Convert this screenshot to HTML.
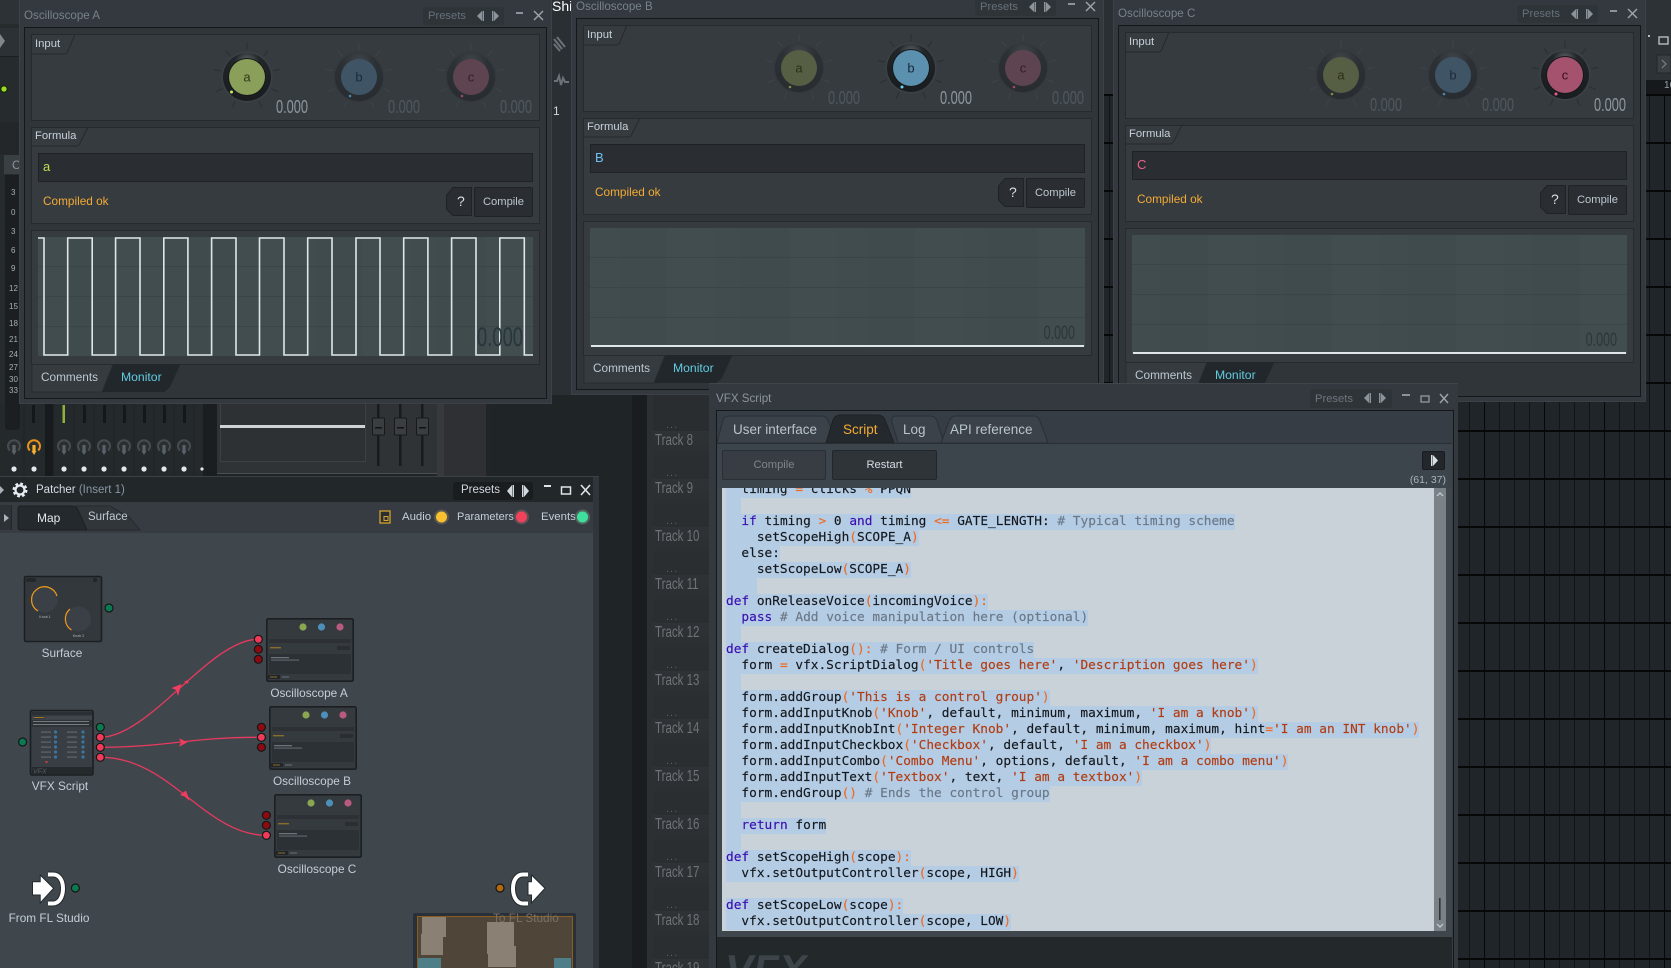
<!DOCTYPE html>
<html><head><meta charset="utf-8"><title>VFX Script</title>
<style>
html,body{margin:0;padding:0;width:1671px;height:968px;overflow:hidden;background:#1f2427}
body{position:relative;font-family:"Liberation Sans",sans-serif;font-size:12px;color:#c5d0da}
div,svg,span.t{position:absolute}
svg{overflow:visible}
.t{position:absolute;white-space:nowrap;line-height:14px;height:14px}
.g{left:1103px;top:94px;width:568px;height:874px;background-color:#1f2529;background-image:linear-gradient(180deg,#060808 2px,transparent 2px),linear-gradient(90deg,#060808 1px,transparent 1px),linear-gradient(90deg,#111517 1px,transparent 1px);background-size:100% 48px,60px 100%,15px 100%;background-position:0 0,21px 0,6px 0}
.osc{width:0;height:0}
.w{left:19px;top:0;width:531px;height:403px;background:#33393e;border:1px solid #3b4146;border-top:0}
.fr{left:24px;top:27px;width:521px;height:370px;background:#30353a;border:1px solid #15181a}
.pn{left:31px;width:507px;background:#363b40;border:1px solid #262a2e}
.ti{top:9px;font-size:11.6px;color:#78818a}
.pre{left:423px;top:7px;width:81px;height:18px;background:#2f3439;border-radius:3px}
.pret{left:428px;top:9px;font-size:11.2px;color:#667078}
.hd{left:35px;font-size:11.3px;color:#c8d2da}
.val{width:80px;text-align:right;font-size:18px;line-height:18px;height:18px;top:98px;transform:scaleX(.71);transform-origin:100% 50%;color:#4f575e}
.box{left:38px;top:153px;width:493px;height:27px;background:#2a2e32;border:1px solid #1f2326}
.ok{left:43px;top:194px;font-size:11.8px;color:#f4ab33}
.cb{left:474px;top:187px;width:57px;height:28px;background:#2a2e32;border:1px solid #1f2326;border-radius:2px;color:#bcc6ce;text-align:center;line-height:28px;font-size:11.2px}
.gr{left:38px;top:237px;width:495px;height:119px;background-color:#414c4e;background-image:linear-gradient(180deg,transparent 29px,#3a4547 29px,#3a4547 30px,transparent 30px,transparent 59px,#3a4547 59px,#3a4547 60px,transparent 60px,transparent 89px,#3a4547 89px,#3a4547 90px,transparent 90px),repeating-linear-gradient(90deg,#414c4e 0,#414c4e 28px,#404b4d 28px,#404b4d 76px,#424d4f 76px,#424d4f 124px)}
.gv{width:80px;text-align:right;left:443px;top:333px;font-size:19px;line-height:20px;height:20px;color:#2c373a;transform:scaleX(.66);transform-origin:100% 50%}
.cm{left:41px;top:370px;font-size:11.8px;color:#bcc8d0}
.mo{left:121px;top:370px;font-size:12.2px;color:#62cbe0}
.l{left:726px;height:16px;line-height:16px;font-family:"DejaVu Sans Mono",monospace;font-size:12.8px;white-space:pre;color:#14181c;-webkit-text-stroke:.15px}
.l b{font-weight:normal;display:inline-block;background:#b5cce5;height:16px;line-height:16px}
.k{color:#3a10b0}.o{color:#f06a20}.c{color:#6a7886}.s{color:#b23c10}
.tr{left:655px;font-size:16px;line-height:16px;height:16px;color:#6c747a;transform:scaleX(.72);transform-origin:0 50%}
.dd{left:666px;font-size:11px;color:#585e62;letter-spacing:1px}
.row{left:653px;width:56px;height:48px;background:linear-gradient(180deg,#2f3336 0,#2a2e31 60%)}
.lb{font-size:11.8px;color:#c4ced6;text-align:center;width:140px}
</style></head><body>
<svg width="0" height="0" style="left:0;top:0"><defs>
<radialGradient id="ra" cx=".5" cy=".2" r=".85"><stop offset="0" stop-color="#6a7076"/><stop offset=".3" stop-color="#23272a"/><stop offset="1" stop-color="#181b1d"/></radialGradient>
<radialGradient id="rd" cx=".5" cy=".2" r=".85"><stop offset="0" stop-color="#41474c"/><stop offset=".4" stop-color="#2c3135"/><stop offset="1" stop-color="#282c30"/></radialGradient>
<symbol id="kd" viewBox="0 0 80 80" width="80" height="80"><path d="M40 13V6M56.8 18.9L61.2 13.4M66.3 33.9L73.1 32.3M64.4 51.6L70.7 54.6M51.8 64.3L54.9 70.6M23.2 18.9L18.8 13.4M13.7 33.9L6.9 32.3M15.6 51.6L9.3 54.6M28.2 64.3L25.1 70.6" stroke="#3e4449" stroke-width="1" fill="none"/><circle cx="40" cy="40" r="25" fill="#33383d"/><circle cx="40" cy="40" r="24" fill="url(#rd)"/></symbol>
<symbol id="ka" viewBox="0 0 80 80" width="80" height="80"><path d="M40 13V6M56.8 18.9L61.2 13.4M66.3 33.9L73.1 32.3M64.4 51.6L70.7 54.6M51.8 64.3L54.9 70.6M23.2 18.9L18.8 13.4M13.7 33.9L6.9 32.3M15.6 51.6L9.3 54.6M28.2 64.3L25.1 70.6" stroke="#2b2f33" stroke-width="1.100" fill="none"/><circle cx="40" cy="40" r="25.5" fill="#3b4146"/><circle cx="40" cy="40" r="24" fill="url(#ra)"/><circle cx="40" cy="40" r="19" fill="#15181a"/></symbol>
<symbol id="al" viewBox="0 0 22 12" width="22" height="12"><path d="M5 1L0 6L5 11Z" fill="#8c949b"/><rect x="5.500" y="1" width="1.500" height="10" fill="#8c949b"/><path d="M17 1L22 6L17 11Z" fill="#8c949b"/><rect x="15" y="1" width="1.500" height="10" fill="#8c949b"/></symbol>
<symbol id="th" viewBox="0 0 88 64" width="88" height="64"><rect x=".8" y=".8" width="86.400" height="62.400" rx="1.500" fill="#353a3e" stroke="#1b1f22" stroke-width="1.600"/><circle cx="37" cy="9" r="3.600" fill="#8aa650"/><circle cx="55.500" cy="9" r="3.600" fill="#4c8fb8"/><circle cx="74" cy="9" r="3.600" fill="#b85a80"/><rect x="3" y="21" width="82" height="4" fill="#2d3135"/><rect x="4" y="29" width="11" height="1.400" fill="#8a6c2c"/><rect x="71" y="28" width="13" height="4" fill="#2a2e31"/><rect x="3" y="36" width="82" height="20" fill="#2c3135"/><rect x="5" y="39" width="18" height="1.300" fill="#6a7378"/><rect x="5" y="41.500" width="28" height="1.200" fill="#5c6469"/><rect x="2" y="57" width="12" height="4" fill="#22262a"/><rect x="4" y="58.500" width="7" height="1" fill="#8a6c2c"/><rect x="16" y="58.500" width="7" height="1" fill="#6a7378"/></symbol>
<symbol id="mk" viewBox="-8 -9 16 20" width="16" height="20"><path d="M-4.200 4.500A6 6 0 1 1 4.200 4.500" fill="#2a2e31" stroke="#464c50" stroke-width="2"/><rect x="-1.600" y="-1" width="3.200" height="7" fill="#596269"/><path d="M-2.500 5L0 9L2.500 5Z" fill="#596269"/></symbol>
<symbol id="mko" viewBox="-8 -9 16 20" width="16" height="20"><path d="M-4.200 4.500A6 6 0 1 1 4.200 4.500" fill="#2a2e31" stroke="#e8901c" stroke-width="2"/><rect x="-1.600" y="-1" width="3.200" height="7" fill="#f4b030"/><path d="M-2.500 5L0 9L2.500 5Z" fill="#f4b030"/></symbol>
</defs></svg>

<div class="g"></div>
<!-- top strips -->
<div style="left:0;top:0;width:20px;height:480px;background:#262b2e"></div>
<div style="left:0;top:0;width:20px;height:24px;background:#2d3236"></div>
<div style="left:0;top:28px;width:20px;height:28px;background:#2c3135;border-bottom:1px solid #1c2022"></div>
<svg width="10" height="14" style="left:0;top:34px"><path d="M0 0L5 7L0 14Z" fill="#7f868c"/></svg>
<div style="left:0;top:122px;width:20px;height:33px;background:#23272a"></div>
<div style="left:4px;top:155px;width:15px;height:19px;background:#3a3f44"></div>
<span class="t" style="left:12px;top:158px;color:#8a9298">C</span>
<div style="left:5px;top:175px;width:14px;height:255px;background:#1b1f21"></div>
<svg width="20" height="240" style="left:0;top:180px;font-family:'Liberation Sans';font-size:8px;fill:#a7afb4"><text x="11" y="15">3</text><text x="11" y="35">0</text><text x="11" y="54">3</text><text x="11" y="73">6</text><text x="11" y="91">9</text><text x="9" y="111">12</text><text x="9" y="129">15</text><text x="9" y="146">18</text><text x="9" y="162">21</text><text x="9" y="177">24</text><text x="9" y="190">27</text><text x="9" y="202">30</text><text x="9" y="213">33</text></svg>
<svg width="10" height="10" style="left:0;top:84px"><circle cx="4" cy="5" r="4" fill="#1c2a12"/><circle cx="4" cy="5" r="2.600" fill="#9be020"/></svg>
<div style="left:551px;top:0;width:20px;height:395px;background:#2a2f33"></div>
<span class="t" style="left:552px;top:-1px;color:#fff;font-size:14px">Shi</span>
<svg width="20" height="90" style="left:552px;top:35px"><path d="M2 4L10 14M5 2L13 12M2 9L8 16" stroke="#6a7278" stroke-width="2"/><path d="M2 46h3l2-5 2 9 2-7 2 4h4" stroke="#6a7278" stroke-width="2" fill="none"/></svg>
<span class="t" style="left:553px;top:104px;color:#cfd6dc;font-size:12px">1</span>
<div style="left:1103px;top:0;width:11px;height:94px;background:#2a2f33"></div>
<div style="left:1646px;top:0;width:25px;height:80px;background:#2d3236"></div>
<div style="left:1646px;top:80px;width:25px;height:14px;background:#16191b"></div>
<span class="t" style="left:1664px;top:79px;color:#9aa2a8;font-size:10px">16</span>
<svg width="25" height="50" style="left:1646px;top:32px"><rect x="13" y="5" width="9" height="7" fill="none" stroke="#b5bdc3" stroke-width="1.400"/><rect x="2" y="3" width="2" height="2" fill="#b5bdc3"/><rect x="11" y="23" width="14" height="18" fill="#3a3f44" stroke="#23272a"/><path d="M16 28L20 32L16 36" fill="none" stroke="#7f878d"/></svg>

<!-- middle strips -->
<div style="left:632px;top:380px;width:15px;height:588px;background:#1a1d1f"></div>
<div style="left:647px;top:380px;width:6px;height:588px;background:#2b3033"></div>
<div style="left:653px;top:383px;width:57px;height:585px;background:#292d30"></div>
<div class="row" style="top:431px"></div><div class="row" style="top:479px"></div><div class="row" style="top:527px"></div><div class="row" style="top:575px"></div><div class="row" style="top:623px"></div><div class="row" style="top:671px"></div><div class="row" style="top:719px"></div><div class="row" style="top:767px"></div><div class="row" style="top:815px"></div><div class="row" style="top:863px"></div><div class="row" style="top:911px"></div><div class="row" style="top:959px"></div>
<span class="t tr" style="top:433px">Track 8</span><span class="t tr" style="top:481px">Track 9</span><span class="t tr" style="top:529px">Track 10</span><span class="t tr" style="top:577px">Track 11</span><span class="t tr" style="top:625px">Track 12</span><span class="t tr" style="top:673px">Track 13</span><span class="t tr" style="top:721px">Track 14</span><span class="t tr" style="top:769px">Track 15</span><span class="t tr" style="top:817px">Track 16</span><span class="t tr" style="top:865px">Track 17</span><span class="t tr" style="top:913px">Track 18</span><span class="t tr" style="top:961px">Track 19</span>
<span class="t dd" style="top:418px">...</span><span class="t dd" style="top:466px">...</span><span class="t dd" style="top:514px">...</span><span class="t dd" style="top:562px">...</span><span class="t dd" style="top:610px">...</span><span class="t dd" style="top:658px">...</span><span class="t dd" style="top:706px">...</span><span class="t dd" style="top:754px">...</span><span class="t dd" style="top:802px">...</span><span class="t dd" style="top:850px">...</span><span class="t dd" style="top:898px">...</span><span class="t dd" style="top:946px">...</span>

<!-- mixer -->
<div style="left:0;top:404px;width:205px;height:72px;background:#24292c"></div>
<div style="left:5px;top:404px;width:15px;height:26px;background:#1b1f21;border-radius:0 0 3px 3px"></div>
<div style="left:45px;top:404px;width:8px;height:72px;background:#181b1d"></div>
<div style="left:203px;top:404px;width:14px;height:72px;background:#1a1e20"></div>
<svg width="210" height="72" style="left:0;top:404px"><g fill="#15181a"><rect x="32" y="1" width="3" height="18"/><rect x="83" y="1" width="3" height="18"/><rect x="103" y="1" width="3" height="18"/><rect x="123" y="1" width="3" height="18"/><rect x="143" y="1" width="3" height="18"/><rect x="163" y="1" width="3" height="18"/><rect x="183" y="1" width="3" height="18"/></g><rect x="62.500" y="1" width="2.500" height="18" fill="#8fb33a"/>
<g stroke="#1f2326"><path d="M24 0V72M54 0V72M74 0V72M94 0V72M114 0V72M134 0V72M154 0V72M174 0V72M194 0V72"/></g>
<g fill="#e2e8ee"><circle cx="14" cy="65" r="2.600"/><circle cx="34" cy="65" r="2.600"/><circle cx="64" cy="65" r="2.600"/><circle cx="84" cy="65" r="2.600"/><circle cx="104" cy="65" r="2.600"/><circle cx="124" cy="65" r="2.600"/><circle cx="144" cy="65" r="2.600"/><circle cx="164" cy="65" r="2.600"/><circle cx="184" cy="65" r="2.600"/><circle cx="202" cy="65" r="1.600"/></g></svg>
<svg width="16" height="20" style="left:6px;top:437px"><use href="#mk"/></svg><svg width="16" height="20" style="left:26px;top:437px"><use href="#mko"/></svg><svg width="16" height="20" style="left:56px;top:437px"><use href="#mk"/></svg><svg width="16" height="20" style="left:76px;top:437px"><use href="#mk"/></svg><svg width="16" height="20" style="left:96px;top:437px"><use href="#mk"/></svg><svg width="16" height="20" style="left:116px;top:437px"><use href="#mk"/></svg><svg width="16" height="20" style="left:136px;top:437px"><use href="#mk"/></svg><svg width="16" height="20" style="left:156px;top:437px"><use href="#mk"/></svg><svg width="16" height="20" style="left:176px;top:437px"><use href="#mk"/></svg>
<div style="left:217px;top:404px;width:220px;height:69px;background:#2f3336;border-bottom:1px solid #4a4f53"></div>
<div style="left:220px;top:404px;width:144px;height:57px;background:#2d3134;border:1px solid #3c4144;border-top:0"></div>
<div style="left:220px;top:425px;width:145px;height:2.500px;background:#cdd3d6"></div>
<svg width="70" height="72" style="left:369px;top:404px"><g fill="#181b1d"><rect x="8" y="0" width="2.500" height="62"/><rect x="30" y="0" width="2.500" height="62"/><rect x="52" y="0" width="2.500" height="62"/></g><g fill="#3a3e42" stroke="#17191b"><rect x="3.500" y="14" width="12" height="17" rx="1"/><rect x="25.500" y="14" width="12" height="17" rx="1"/><rect x="47.500" y="14" width="12" height="17" rx="1"/></g><g fill="#101214"><rect x="6" y="23" width="7" height="1.500"/><rect x="28" y="23" width="7" height="1.500"/><rect x="50" y="23" width="7" height="1.500"/></g></svg>
<div style="left:437px;top:404px;width:7px;height:72px;background:#37393c"></div>
<div style="left:444px;top:404px;width:42px;height:72px;background:#2e3033"></div>
<div style="left:486px;top:404px;width:5px;height:72px;background:#222528"></div>

<!-- patcher -->
<div style="left:0;top:476px;width:599px;height:492px;background:#2f353a;border-top:1px solid #3a4045"></div>
<div style="left:0;top:477px;width:593px;height:25px;background:#22272a"></div>
<svg width="8" height="10" style="left:0;top:485px"><path d="M0 1L4 5L0 9Z" fill="#aab2b8"/></svg>
<svg width="20" height="20" style="left:10px;top:480px"><circle cx="10" cy="10" r="4.500" fill="none" stroke="#e6ecf2" stroke-width="2.200"/><circle cx="10" cy="10" r="6.400" fill="none" stroke="#e6ecf2" stroke-width="2.200" stroke-dasharray="2.800 2.230"/></svg>
<span class="t" style="left:36px;top:483px;font-size:11.500px;color:#d5dde5">Patcher <span style="color:#8a96a2">(Insert 1)</span></span>
<div style="left:453px;top:482px;width:80px;height:18px;background:#191d20;border-radius:3px"></div>
<span class="t" style="left:461px;top:483px;font-size:11.500px;color:#d0d7dd">Presets</span>
<svg width="22" height="12" style="left:507px;top:485px"><path d="M5 0L0 6L5 12Z" fill="#d0d7dd"/><rect x="5.500" y="0" width="1.500" height="12" fill="#d0d7dd"/><path d="M17 0L22 6L17 12Z" fill="#d0d7dd"/><rect x="15" y="0" width="1.500" height="12" fill="#d0d7dd"/></svg>
<svg width="50" height="14" style="left:541px;top:483px"><rect x="3" y="2" width="7" height="2" fill="#dfe5ea"/><rect x="20.500" y="4" width="9" height="7" fill="none" stroke="#dfe5ea" stroke-width="1.500"/><path d="M40 2L49 12M49 2L40 12" stroke="#dfe5ea" stroke-width="1.600"/></svg>
<div style="left:0;top:502px;width:593px;height:31px;background:#363c42"></div>
<div style="left:0;top:505px;width:11px;height:25px;background:#2d3237;border-right:1px solid #23272a"></div>
<svg width="6" height="8" style="left:4px;top:514px"><path d="M0 0L5 4L0 8Z" fill="#aab2b8"/></svg>
<svg width="125" height="26" style="left:18px;top:505px"><path d="M58 1H92L111 12 L122 25H66Z" fill="#31363b" stroke="#262a2e"/><path d="M0 4Q0 1 3 1H54Q58 1 60 5L69 25H3Q0 25 0 22Z" fill="#24292e" stroke="#1c2023"/></svg>
<span class="t" style="left:37px;top:511px;font-size:12px;color:#e2e8ee">Map</span>
<span class="t" style="left:88px;top:510px;font-size:11.500px;color:#c0c9d1">Surface</span>
<svg width="14" height="14" style="left:379px;top:510px"><rect x="1" y="1" width="10" height="12" fill="#2a2e30" stroke="#c89a30" stroke-width="1.400"/><rect x="5" y="6.500" width="4" height="4" fill="none" stroke="#d8a838"/></svg>
<span class="t" style="left:402px;top:510px;font-size:11.400px;color:#c5ced6">Audio</span>
<span class="t" style="left:457px;top:510px;font-size:11px;color:#c5ced6">Parameters</span>
<span class="t" style="left:541px;top:510px;font-size:11.400px;color:#c5ced6">Events</span>
<svg width="160" height="16" style="left:432px;top:509px"><circle cx="9.500" cy="8" r="7.500" fill="#5a5750"/><circle cx="9.500" cy="8" r="5.500" fill="#f8bf2e"/><circle cx="89.500" cy="8" r="7.500" fill="#5e5054"/><circle cx="89.500" cy="8" r="5.500" fill="#f0425a"/><circle cx="150.500" cy="8" r="7.500" fill="#53645d"/><circle cx="150.500" cy="8" r="5.500" fill="#3fe09e"/></svg>
<div style="left:0;top:533px;width:593px;height:435px;background:#3f474d"></div>

<!-- nodes -->
<svg width="593" height="435" viewBox="0 533 593 435" style="left:0;top:533px">
<g fill="none" stroke="#e8395e" stroke-width="1.300"><path d="M100.300 737.300C150 737 210 639 258.300 639.300"/><path d="M100.300 747.300C170 747 190 737 261.400 737.300"/><path d="M100.300 757.300C170 757 205 835.300 266.400 835.300"/></g>
<g fill="#f03c60"><path d="M171.500 688L181.500 684L178 696L176 690Z"/><path d="M184 681.500L188.500 680L188 684Z"/><path d="M179 738.300L187.500 742.300L179 746.700L181 742.300Z"/><path d="M180 795L186 790.500L189.500 800.700L184.500 796.500Z"/></g>
<g stroke="#141618" stroke-width="1.200"><circle cx="109" cy="608" r="4" fill="#0c7a50"/><circle cx="22.600" cy="742" r="4" fill="#0c7a50"/><circle cx="100.300" cy="727.300" r="4" fill="#0c7a50"/><circle cx="100.300" cy="737.300" r="4" fill="#f03a58"/><circle cx="100.300" cy="747.300" r="4" fill="#f03a58"/><circle cx="100.300" cy="757.300" r="4" fill="#f03a58"/>
<circle cx="258.300" cy="639.300" r="4" fill="#f03a58"/><circle cx="258.300" cy="649.300" r="4" fill="#8c0a10"/><circle cx="258.300" cy="659.300" r="4" fill="#8c0a10"/>
<circle cx="261.400" cy="727.300" r="4" fill="#8c0a10"/><circle cx="261.400" cy="737.300" r="4" fill="#f03a58"/><circle cx="261.400" cy="747.300" r="4" fill="#8c0a10"/>
<circle cx="266.400" cy="815.300" r="4" fill="#8c0a10"/><circle cx="266.400" cy="825.300" r="4" fill="#8c0a10"/><circle cx="266.400" cy="835.300" r="4" fill="#f03a58"/>
<circle cx="75.400" cy="888" r="4" fill="#0c7a50"/><circle cx="500" cy="888" r="4" fill="#b06a10"/></g>
<!-- surface thumb -->
<rect x="24.500" y="576.500" width="77" height="65" rx="1.500" fill="#33383c" stroke="#1b1f22" stroke-width="1.600"/>
<g fill="#20242700"><rect x="26" y="578" width="10" height="5" rx="2"/></g><g fill="#23272a"><rect x="26" y="578" width="10" height="4" rx="2"/><rect x="93" y="578" width="4" height="4" rx="1"/></g>
<circle cx="45" cy="600" r="12.500" fill="#3a4046"/><circle cx="78.500" cy="619" r="12.500" fill="#3a4046"/>
<path d="M38 611A13 13 0 1 1 57 596" fill="none" stroke="#e8971e" stroke-width="1.300"/><path d="M71.500 630A13 13 0 0 1 70 609" fill="none" stroke="#e8971e" stroke-width="1.300"/>
<g font-family="Liberation Sans" font-size="3.600" fill="#b0b8be" text-anchor="middle"><text x="45" y="618">Knob 1</text><text x="78.500" y="637">Knob 2</text></g>
<!-- vfx thumb -->
<rect x="30.500" y="710.500" width="62.500" height="64.500" rx="1.500" fill="#383e43" stroke="#1b1f22" stroke-width="1.600"/>
<rect x="32" y="712" width="60" height="3.500" fill="#2a2f33"/><rect x="32" y="715.500" width="60" height="4" fill="#3f454a"/><rect x="33.500" y="716" width="11" height="3" fill="#33373a"/><rect x="34" y="717" width="10" height="1" fill="#a07a28"/>
<rect x="32" y="720" width="60" height="7" fill="#2e3337"/><rect x="33" y="721" width="56" height=".8" fill="#868e94"/><rect x="33" y="724" width="56" height=".8" fill="#868e94"/>
<g fill="#5f676d"><rect x="41" y="731.500" width="10" height="1.200"/><rect x="41" y="736.500" width="10" height="1.200"/><rect x="41" y="741.500" width="10" height="1.200"/><rect x="41" y="746.500" width="10" height="1.200"/><rect x="41" y="751.500" width="10" height="1.200"/><rect x="41" y="756.500" width="10" height="1.200"/><rect x="67" y="731.500" width="10" height="1.200"/><rect x="67" y="736.500" width="10" height="1.200"/><rect x="67" y="741.500" width="10" height="1.200"/><rect x="67" y="746.500" width="10" height="1.200"/><rect x="67" y="751.500" width="10" height="1.200"/><rect x="67" y="756.500" width="10" height="1.200"/></g>
<g fill="#3a74a0"><circle cx="55.500" cy="732" r="1.600"/><circle cx="55.500" cy="737" r="1.600"/><circle cx="55.500" cy="742" r="1.600"/><circle cx="55.500" cy="747" r="1.600"/><circle cx="55.500" cy="752" r="1.600"/><circle cx="55.500" cy="757" r="1.600"/><circle cx="83" cy="732" r="1.600"/><circle cx="83" cy="737" r="1.600"/><circle cx="83" cy="742" r="1.600"/><circle cx="83" cy="747" r="1.600"/><circle cx="83" cy="752" r="1.600"/><circle cx="83" cy="757" r="1.600"/></g>
<rect x="45.500" y="761" width="2" height="2" fill="#c84040"/>
<rect x="32" y="767" width="60" height="7.500" fill="#24292c"/><text x="33" y="773.500" font-family="Liberation Sans" font-size="7" font-style="italic" fill="#555c62">VFX</text>
<use href="#th" x="266" y="618"/><use href="#th" x="269" y="706"/><use href="#th" x="274" y="794"/>
<!-- io -->
<g><path d="M32.500 881.700H40.200V875L53.600 888.300L40.200 903V895H32.500Z" fill="#fff" stroke="#23282b" stroke-width="1"/><path d="M48 874.500H53C59 874.500 63 880 63 888.500S59 903.500 53 903.500H48" fill="none" stroke="#23282b" stroke-width="6"/><path d="M48 874.500H53C59 874.500 63 880 63 888.500S59 903.500 53 903.500H48" fill="none" stroke="#fff" stroke-width="4"/></g>
<g><path d="M528 881.700H531.500V875L545 888.300L531.500 903V895H528Z" fill="#fff" stroke="#23282b" stroke-width="1"/><path d="M528 874.500H523C517 874.500 513 880 513 888.500S517 903.500 523 903.500H528" fill="none" stroke="#23282b" stroke-width="6"/><path d="M528 874.500H523C517 874.500 513 880 513 888.500S517 903.500 523 903.500H528" fill="none" stroke="#fff" stroke-width="4"/></g>
</svg>
<span class="t lb" style="left:-8px;top:646px">Surface</span>
<span class="t lb" style="left:239px;top:686px">Oscilloscope A</span>
<span class="t lb" style="left:242px;top:774px">Oscilloscope B</span>
<span class="t lb" style="left:247px;top:862px">Oscilloscope C</span>
<span class="t lb" style="left:-10px;top:779px">VFX Script</span>
<span class="t lb" style="left:-21px;top:911px">From FL Studio</span>
<!-- minimap -->
<div style="left:413px;top:913px;width:163px;height:55px;background:#2a3039;border-radius:2px 2px 0 0"></div>
<div style="left:417px;top:916px;width:154px;height:52px;background:#504539;border:1px solid #8a5c1e;border-bottom:0;box-sizing:content-box"></div>
<div style="left:422px;top:917px;width:24px;height:20px;background:#8a8074"></div><div style="left:421px;top:934px;width:22px;height:21px;background:#8a8074"></div>
<div style="left:487px;top:922px;width:27px;height:21px;background:#8a8074"></div><div style="left:487px;top:934px;width:27px;height:20px;background:#8a8074"></div><div style="left:488px;top:946px;width:28px;height:21px;background:#8a8074"></div>
<div style="left:418px;top:958px;width:23px;height:10px;background:#4e7f88"></div><div style="left:554px;top:958px;width:17px;height:10px;background:#4e7f88"></div>
<span class="t" style="left:493px;top:911px;font-size:11.800px;color:#7a7164">To FL Studio</span>

<!-- OSC A -->
<div class="osc" style="left:0;top:0">
<div class="w"></div><div class="fr"></div>
<span class="t ti" style="left:24px">Oscilloscope A</span>
<div class="pre"></div><span class="t pret">Presets</span>
<svg width="22" height="12" style="left:477px;top:10px"><use href="#al"/></svg>
<svg width="30" height="12" style="left:516px;top:10px"><rect x="0" y="2" width="7" height="2" fill="#8c949b"/><path d="M18 1L27 10M27 1L18 10" stroke="#9aa2a8" stroke-width="1.500"/></svg>
<div class="pn" style="top:34px;height:85px"></div>
<svg width="60" height="22" style="left:31px;top:34px"><path d="M0 20H33Q36 20 37 17L44 0" fill="none" stroke="#262a2e"/></svg>
<span class="t hd" style="top:37px">Input</span>
<svg width="80" height="80" style="left:207px;top:37px"><use href="#ka"/><circle cx="40" cy="40" r="18" fill="#8aa05a"/><circle cx="24.500" cy="55" r="1.500" fill="#c8e860"/><text x="40" y="44.500" font-family="Liberation Sans" font-size="13" text-anchor="middle" fill="#2f3a18">a</text></svg>
<svg width="80" height="80" style="left:319px;top:37px"><use href="#kd"/><circle cx="40" cy="40" r="18" fill="#3f5566"/><circle cx="31" cy="59" r="1.300" fill="#4a88b0"/><text x="40" y="44.500" font-family="Liberation Sans" font-size="13" text-anchor="middle" fill="#1a2a38">b</text></svg>
<svg width="80" height="80" style="left:431px;top:37px"><use href="#kd"/><circle cx="40" cy="40" r="18" fill="#5d4450"/><circle cx="31" cy="59" r="1.300" fill="#a04868"/><text x="40" y="44.500" font-family="Liberation Sans" font-size="13" text-anchor="middle" fill="#3a1a24">c</text></svg>
<span class="t val" style="left:228px;color:#8d969d">0.000</span><span class="t val" style="left:340px">0.000</span><span class="t val" style="left:452px">0.000</span>
<div class="pn" style="top:127px;height:95px"></div>
<svg width="70" height="22" style="left:31px;top:127px"><path d="M0 19H45Q48 19 49 16L57 0" fill="none" stroke="#262a2e"/></svg>
<span class="t hd" style="top:129px">Formula</span>
<div class="box"></div><span class="t" style="left:43px;top:160px;font-size:13px;color:#b8e050">a</span>
<span class="t ok">Compiled ok</span>
<svg width="28" height="30" style="left:445px;top:187px"><path d="M8 .5H26.500V28.500H8L1.500 22V8Z" fill="#2a2e32" stroke="#1f2326"/></svg>
<span class="t" style="left:457px;top:194px;font-size:14px;color:#d8dfe5">?</span>
<div class="cb">Compile</div>
<div class="pn" style="top:230px;height:133px"></div>
<div class="gr"></div>
<svg width="495" height="119" style="left:38px;top:237px"><path d="M0 1H6V118H29.700V1H54.200V118H77.600V1H102V118H125.800V1H149.900V118H173.600V1H198V118H221.500V1H246V118H269.700V1H294V118H318V1H342V118H365.700V1H389.900V118H413.600V1H438V118H461.800V1H486.300V118H495" fill="none" stroke="#dfe6ea" stroke-width="1.600"/></svg>
<span class="t" style="left:443px;top:325px;width:80px;text-align:right;font-size:27px;line-height:24px;height:24px;color:#27353c;transform:scaleX(.68);transform-origin:100% 50%">0.000</span>
<svg width="150" height="29" style="left:32px;top:364px"><path d="M0 .5H81L70 28H0Z" fill="#363b40" stroke="#282c30"/><path d="M81.500 0H148.500L138 23L132.500 28H70.500Z" fill="#22272b"/></svg>
<span class="t cm">Comments</span><span class="t mo">Monitor</span>
</div>

<!-- OSC B -->
<div class="osc" style="left:552px;top:-9px">
<div class="w"></div><div class="fr"></div>
<span class="t ti" style="left:24px">Oscilloscope B</span>
<div class="pre"></div><span class="t pret">Presets</span>
<svg width="22" height="12" style="left:477px;top:10px"><use href="#al"/></svg>
<svg width="30" height="12" style="left:516px;top:10px"><rect x="0" y="2" width="7" height="2" fill="#8c949b"/><path d="M18 1L27 10M27 1L18 10" stroke="#9aa2a8" stroke-width="1.500"/></svg>
<div class="pn" style="top:34px;height:85px"></div>
<svg width="60" height="22" style="left:31px;top:34px"><path d="M0 20H33Q36 20 37 17L44 0" fill="none" stroke="#262a2e"/></svg>
<span class="t hd" style="top:37px">Input</span>
<svg width="80" height="80" style="left:207px;top:37px"><use href="#kd"/><circle cx="40" cy="40" r="18" fill="#565f44"/><circle cx="31" cy="59" r="1.300" fill="#7a9040"/><text x="40" y="44.500" font-family="Liberation Sans" font-size="13" text-anchor="middle" fill="#2a3018">a</text></svg>
<svg width="80" height="80" style="left:319px;top:37px"><use href="#ka"/><circle cx="40" cy="40" r="18" fill="#5b90ae"/><circle cx="31" cy="59" r="1.500" fill="#70d0f8"/><text x="40" y="44.500" font-family="Liberation Sans" font-size="13" text-anchor="middle" fill="#15283a">b</text></svg>
<svg width="80" height="80" style="left:431px;top:37px"><use href="#kd"/><circle cx="40" cy="40" r="18" fill="#5d4450"/><circle cx="31" cy="59" r="1.300" fill="#a04868"/><text x="40" y="44.500" font-family="Liberation Sans" font-size="13" text-anchor="middle" fill="#3a1a24">c</text></svg>
<span class="t val" style="left:228px">0.000</span><span class="t val" style="left:340px;color:#8d969d">0.000</span><span class="t val" style="left:452px">0.000</span>
<div class="pn" style="top:127px;height:95px"></div>
<svg width="70" height="22" style="left:31px;top:127px"><path d="M0 19H45Q48 19 49 16L57 0" fill="none" stroke="#262a2e"/></svg>
<span class="t hd" style="top:129px">Formula</span>
<div class="box"></div><span class="t" style="left:43px;top:160px;font-size:13px;color:#6ec0f0">B</span>
<span class="t ok">Compiled ok</span>
<svg width="28" height="30" style="left:445px;top:187px"><path d="M8 .5H26.500V28.500H8L1.500 22V8Z" fill="#2a2e32" stroke="#1f2326"/></svg>
<span class="t" style="left:457px;top:194px;font-size:14px;color:#d8dfe5">?</span>
<div class="cb">Compile</div>
<div class="pn" style="top:230px;height:133px"></div>
<div class="gr"></div>
<div style="left:39px;top:354px;width:493px;height:2px;background:#dfe6ea"></div>
<span class="t gv">0.000</span>
<svg width="150" height="29" style="left:32px;top:364px"><path d="M0 .5H81L70 28H0Z" fill="#363b40" stroke="#282c30"/><path d="M81.500 0H148.500L138 23L132.500 28H70.500Z" fill="#22272b"/></svg>
<span class="t cm">Comments</span><span class="t mo">Monitor</span>
</div>

<!-- OSC C -->
<div class="osc" style="left:1094px;top:-2px">
<div class="w"></div><div class="fr"></div>
<span class="t ti" style="left:24px">Oscilloscope C</span>
<div class="pre"></div><span class="t pret">Presets</span>
<svg width="22" height="12" style="left:477px;top:10px"><use href="#al"/></svg>
<svg width="30" height="12" style="left:516px;top:10px"><rect x="0" y="2" width="7" height="2" fill="#8c949b"/><path d="M18 1L27 10M27 1L18 10" stroke="#9aa2a8" stroke-width="1.500"/></svg>
<div class="pn" style="top:34px;height:85px"></div>
<svg width="60" height="22" style="left:31px;top:34px"><path d="M0 20H33Q36 20 37 17L44 0" fill="none" stroke="#262a2e"/></svg>
<span class="t hd" style="top:37px">Input</span>
<svg width="80" height="80" style="left:207px;top:37px"><use href="#kd"/><circle cx="40" cy="40" r="18" fill="#565f44"/><circle cx="31" cy="59" r="1.300" fill="#7a9040"/><text x="40" y="44.500" font-family="Liberation Sans" font-size="13" text-anchor="middle" fill="#2a3018">a</text></svg>
<svg width="80" height="80" style="left:319px;top:37px"><use href="#kd"/><circle cx="40" cy="40" r="18" fill="#3f5566"/><circle cx="31" cy="59" r="1.300" fill="#4a88b0"/><text x="40" y="44.500" font-family="Liberation Sans" font-size="13" text-anchor="middle" fill="#1a2a38">b</text></svg>
<svg width="80" height="80" style="left:431px;top:37px"><use href="#ka"/><circle cx="40" cy="40" r="18" fill="#a5526e"/><circle cx="31" cy="59" r="1.500" fill="#f05890"/><text x="40" y="44.500" font-family="Liberation Sans" font-size="13" text-anchor="middle" fill="#3a1020">c</text></svg>
<span class="t val" style="left:228px">0.000</span><span class="t val" style="left:340px">0.000</span><span class="t val" style="left:452px;color:#8d969d">0.000</span>
<div class="pn" style="top:127px;height:95px"></div>
<svg width="70" height="22" style="left:31px;top:127px"><path d="M0 19H45Q48 19 49 16L57 0" fill="none" stroke="#262a2e"/></svg>
<span class="t hd" style="top:129px">Formula</span>
<div class="box"></div><span class="t" style="left:43px;top:160px;font-size:13px;color:#f06088">C</span>
<span class="t ok">Compiled ok</span>
<svg width="28" height="30" style="left:445px;top:187px"><path d="M8 .5H26.500V28.500H8L1.500 22V8Z" fill="#2a2e32" stroke="#1f2326"/></svg>
<span class="t" style="left:457px;top:194px;font-size:14px;color:#d8dfe5">?</span>
<div class="cb">Compile</div>
<div class="pn" style="top:230px;height:133px"></div>
<div class="gr"></div>
<div style="left:39px;top:354px;width:493px;height:2px;background:#dfe6ea"></div>
<span class="t gv">0.000</span>
<svg width="150" height="29" style="left:32px;top:364px"><path d="M0 .5H81L70 28H0Z" fill="#363b40" stroke="#282c30"/><path d="M81.500 0H148.500L138 23L132.500 28H70.500Z" fill="#22272b"/></svg>
<span class="t cm">Comments</span><span class="t mo">Monitor</span>
</div>

<!-- VFX WINDOW -->
<div style="left:709px;top:383px;width:749px;height:585px;background:#33393e;border-top:1px solid #40464b"></div>
<div style="left:716px;top:410px;width:736px;height:558px;background:#363d44;border:1px solid #15181a;border-bottom:0"></div>
<span class="t" style="left:716px;top:392px;font-size:11.600px;color:#8d959c">VFX Script</span>
<div style="left:1310px;top:389px;width:82px;height:19px;background:#2f3439;border-radius:3px"></div>
<span class="t" style="left:1315px;top:392px;font-size:11.200px;color:#6c757c">Presets</span>
<svg width="22" height="12" style="left:1364px;top:392px"><use href="#al"/></svg>
<svg width="46" height="14" style="left:1402px;top:391px"><rect x="0" y="3" width="8" height="2" fill="#8c949b"/><rect x="19" y="5" width="8" height="6" fill="none" stroke="#8c949b" stroke-width="1.400"/><path d="M38 3L46 12M46 3L38 12" stroke="#9aa2a8" stroke-width="1.500"/></svg>
<svg width="340" height="30" style="left:716px;top:414px"><path d="M1 29L7 6Q8 2 13 2H106Q110 2 112 6L120 29Z" fill="#3b4249" stroke="#2a2f34"/><path d="M182 29L176 8Q175 2 180 2H214Q219 2 221 7L228 29Z" fill="#3b4249" stroke="#2a2f34"/><path d="M225 29L233 7Q235 2 240 2H318Q322 2 324 7L332 29Z" fill="#3b4249" stroke="#2a2f34"/><path d="M110 29L117 6Q119 1 124 1H162Q167 1 169 6L178 29Z" fill="#24292e" stroke="#1d2124"/></svg>
<span class="t" style="left:733px;top:423px;font-size:13.500px;color:#b9c4cd">User interface</span>
<span class="t" style="left:843px;top:423px;font-size:13.500px;color:#f4ab33">Script</span>
<span class="t" style="left:903px;top:423px;font-size:13.500px;color:#b9c4cd">Log</span>
<span class="t" style="left:950px;top:423px;font-size:13.500px;color:#b9c4cd">API reference</span>
<div style="left:717px;top:443px;width:735px;height:45px;background:#3d454c;border-top:1px solid #2a2f34;box-sizing:border-box"></div>
<div style="left:722px;top:450px;width:104px;height:30px;background:#373d42;border:1px solid #2a2f33;border-radius:2px;color:#7d868c;text-align:center;line-height:28px;font-size:11.200px;box-sizing:border-box">Compile</div>
<div style="left:832px;top:450px;width:105px;height:30px;background:#2f3439;border:1px solid #23272b;border-radius:2px;color:#d5dde4;text-align:center;line-height:28px;font-size:11.200px;box-sizing:border-box">Restart</div>
<div style="left:1422px;top:451px;width:23px;height:19px;background:#23272b;border:1px solid #1a1d20;border-radius:2px;box-sizing:border-box"></div>
<svg width="7" height="11" style="left:1431px;top:455px"><rect x="0" y="0" width="1.500" height="11" fill="#d8dfe5"/><path d="M2 0L7 5.500L2 11Z" fill="#d8dfe5"/></svg>
<span class="t" style="left:1400px;top:473px;width:46px;text-align:right;font-size:10.500px;color:#a9b3bb">(61, 37)</span>
<div style="left:717px;top:488px;width:735px;height:449px;background:#3f474d"></div>
<div style="left:722px;top:488px;width:712px;height:443px;background:#c9d1d9;overflow:hidden">
<div style="left:0;top:-488px;width:712px;height:931px">
<div class="l" style="left:4px;top:482px"><b>  timing <span class="o">=</span> clicks <span class="o">%</span> PPQN</b></div>
<div class="l" style="left:4px;top:498px"><b>  </b></div>
<div class="l" style="left:4px;top:514px"><b>  <span class="k">if</span> timing <span class="o">&gt;</span> 0 <span class="k">and</span> timing <span class="o">&lt;=</span> GATE_LENGTH: <span class="c"># Typical timing scheme</span></b></div>
<div class="l" style="left:4px;top:530px"><b>    setScopeHigh<span class="o">(</span>SCOPE_A<span class="o">)</span></b></div>
<div class="l" style="left:4px;top:546px"><b>  else:</b></div>
<div class="l" style="left:4px;top:562px"><b>    setScopeLow<span class="o">(</span>SCOPE_A<span class="o">)</span></b></div>
<div class="l" style="left:4px;top:578px"><b>    </b></div>
<div class="l" style="left:4px;top:594px"><b><span class="k">def</span> onReleaseVoice<span class="o">(</span>incomingVoice<span class="o">):</span></b></div>
<div class="l" style="left:4px;top:610px"><b>  <span class="k">pass</span> <span class="c"># Add voice manipulation here (optional)</span></b></div>
<div class="l" style="left:4px;top:626px"><b>  </b></div>
<div class="l" style="left:4px;top:642px"><b><span class="k">def</span> createDialog<span class="o">():</span> <span class="c"># Form / UI controls</span></b></div>
<div class="l" style="left:4px;top:658px"><b>  form <span class="o">=</span> vfx.ScriptDialog<span class="o">(</span><span class="s">'Title goes here'</span>, <span class="s">'Description goes here'</span><span class="o">)</span></b></div>
<div class="l" style="left:4px;top:674px"><b>  </b></div>
<div class="l" style="left:4px;top:690px"><b>  form.addGroup<span class="o">(</span><span class="s">'This is a control group'</span><span class="o">)</span></b></div>
<div class="l" style="left:4px;top:706px"><b>  form.addInputKnob<span class="o">(</span><span class="s">'Knob'</span>, default, minimum, maximum, <span class="s">'I am a knob'</span><span class="o">)</span></b></div>
<div class="l" style="left:4px;top:722px"><b>  form.addInputKnobInt<span class="o">(</span><span class="s">'Integer Knob'</span>, default, minimum, maximum, hint<span class="o">=</span><span class="s">'I am an INT knob'</span><span class="o">)</span></b></div>
<div class="l" style="left:4px;top:738px"><b>  form.addInputCheckbox<span class="o">(</span><span class="s">'Checkbox'</span>, default, <span class="s">'I am a checkbox'</span><span class="o">)</span></b></div>
<div class="l" style="left:4px;top:754px"><b>  form.addInputCombo<span class="o">(</span><span class="s">'Combo Menu'</span>, options, default, <span class="s">'I am a combo menu'</span><span class="o">)</span></b></div>
<div class="l" style="left:4px;top:770px"><b>  form.addInputText<span class="o">(</span><span class="s">'Textbox'</span>, text, <span class="s">'I am a textbox'</span><span class="o">)</span></b></div>
<div class="l" style="left:4px;top:786px"><b>  form.endGroup<span class="o">()</span> <span class="c"># Ends the control group</span></b></div>
<div class="l" style="left:4px;top:802px"><b>  </b></div>
<div class="l" style="left:4px;top:818px"><b>  <span class="k">return</span> form</b></div>
<div class="l" style="left:4px;top:834px"><b>  </b></div>
<div class="l" style="left:4px;top:850px"><b><span class="k">def</span> setScopeHigh<span class="o">(</span>scope<span class="o">):</span></b></div>
<div class="l" style="left:4px;top:866px"><b>  vfx.setOutputController<span class="o">(</span>scope, HIGH<span class="o">)</span></b></div>
<div class="l" style="left:4px;top:898px"><b><span class="k">def</span> setScopeLow<span class="o">(</span>scope<span class="o">):</span></b></div>
<div class="l" style="left:4px;top:914px"><b>  vfx.setOutputController<span class="o">(</span>scope, LOW<span class="o">)</span></b></div>
</div></div>
<div style="left:1434px;top:488px;width:12px;height:443px;background:#7a8288"></div>
<svg width="12" height="443" style="left:1434px;top:488px"><path d="M3 8L6 5L9 8" fill="none" stroke="#c9d1d9" stroke-width="1.200"/><path d="M3 436L6 439L9 436" fill="none" stroke="#c9d1d9" stroke-width="1.200"/><rect x="5" y="410" width="1.600" height="22" fill="#30363a"/></svg>
<div style="left:717px;top:937px;width:735px;height:31px;background:#23282b;overflow:hidden">
<span class="t" style="left:8px;top:12px;font-size:42px;line-height:42px;height:42px;font-style:italic;font-weight:bold;color:#3d454b">VFX</span>
<span class="t" style="left:95px;top:32px;font-size:11px;color:#aab2b8">Script</span>
</div>
</body></html>
